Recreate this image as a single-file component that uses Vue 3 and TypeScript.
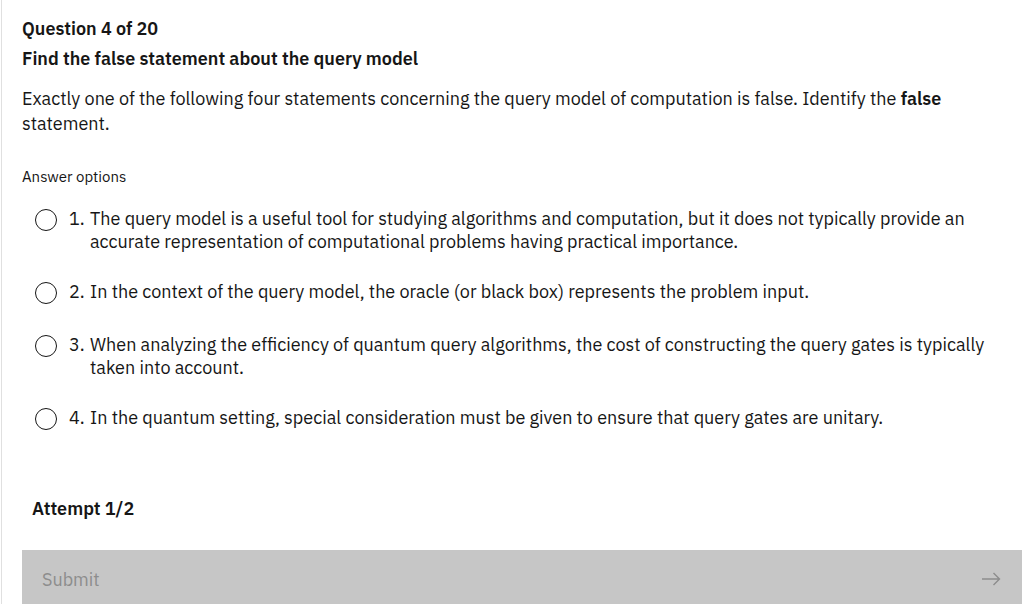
<script setup lang="ts">
import { ref } from 'vue'

const options: string[] = [
  'The query model is a useful tool for studying algorithms and computation, but it does not typically provide an accurate representation of computational problems having practical importance.',
  'In the context of the query model, the oracle (or black box) represents the problem input.',
  'When analyzing the efficiency of quantum query algorithms, the cost of constructing the query gates is typically taken into account.',
  'In the quantum setting, special consideration must be given to ensure that query gates are unitary.',
]
const selected = ref<number | null>(null)
</script>

<template>
  <form class="quiz" @submit.prevent>
    <h2 class="title">Question 4 of 20</h2>
    <h3 class="title">Find the false statement about the query model</h3>
    <p class="prompt">
      Exactly one of the following four statements concerning the query model of computation is false. Identify the
      <strong>false</strong> statement.
    </p>
    <fieldset class="answers">
      <legend class="legend">Answer options</legend>
      <label v-for="(text, i) in options" :key="i" class="option">
        <input v-model="selected" class="radio" type="radio" name="answer" :value="i" />
        <span class="number">{{ i + 1 }}.</span>
        <span class="text">{{ text }}</span>
      </label>
    </fieldset>
    <p class="attempt">Attempt 1/2</p>
    <button class="submit" type="submit" :disabled="selected === null">
      <span>Submit</span>
      <svg class="arrow" viewBox="0 0 20 20" aria-hidden="true">
        <path d="M0 10H17M11.5 4L17.5 10L11.5 16" fill="none" stroke="currentColor" stroke-width="1.4" />
      </svg>
    </button>
  </form>
</template>

<style>
body {
  background: #fff;
}
</style>

<style scoped>
.quiz {
  box-sizing: border-box;
  min-height: 100vh;
  margin-left: 1px;
  padding: 14px 10px 0 20px;
  border-left: 1px solid #e0e0e0;
  color: #161616;
  font: 18px/23px "IBM Plex Sans", "Noto Sans", sans-serif;
}
.title {
  margin: 0;
  font-size: 18px;
  font-weight: 600;
  line-height: 30px;
}
.prompt {
  margin: 12px 0 0;
  line-height: 25px;
}
.prompt strong {
  font-weight: 600;
}
.answers {
  margin: 31px 0 0;
  padding: 0;
  border: 0;
}
.legend {
  padding: 0;
  margin-bottom: 20px;
  font-size: 15px;
  line-height: 20px;
}
.option {
  display: flex;
  align-items: flex-start;
  margin: 0 36px 27px 13px;
}
.radio {
  appearance: none;
  flex: none;
  width: 22px;
  height: 22px;
  margin: 2px 12px 2px 0;
  border: 1px solid #161616;
  border-radius: 50%;
}
.radio:checked {
  background: radial-gradient(#161616 5px, transparent 6px);
}
.number {
  flex: none;
  width: 21px;
}
.attempt {
  margin: 38px 0 0 10px;
  font-weight: 600;
}
.submit {
  display: flex;
  align-items: center;
  justify-content: space-between;
  width: 100%;
  height: 58px;
  margin-top: 30px;
  padding: 0 20px;
  border: 0;
  background: #c6c6c6;
  color: #8d8d8d;
  font: inherit;
}
.arrow {
  width: 20px;
  height: 20px;
}
</style>
